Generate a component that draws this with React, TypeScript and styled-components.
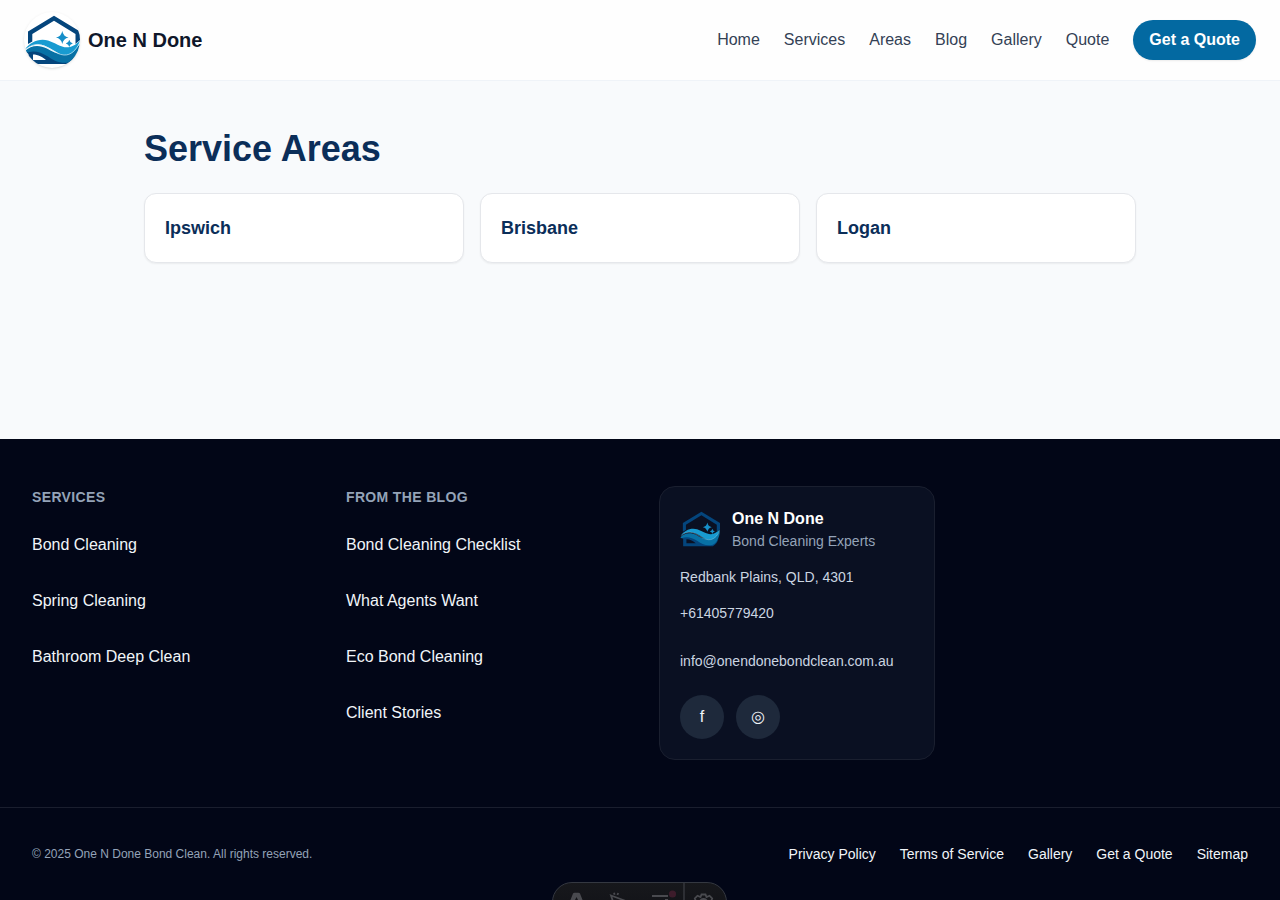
import React from "react";
import styled, { createGlobalStyle } from "styled-components";

const GlobalStyle = createGlobalStyle`
  *, *::before, *::after { box-sizing: border-box; }
  html, body { margin: 0; height: 900px; overflow: hidden; background: #f8fafc; }
  body { font-family: "Liberation Sans", Arial, sans-serif; font-size: 16px; line-height: 24px; color: #0f172a; }
  h1, h2, h3, p, ul { margin: 0; padding: 0; }
  ul { list-style: none; }
  a { color: inherit; text-decoration: none; }
`;

const Page = styled.div`
  display: flex;
  flex-direction: column;
  height: 900px;
  overflow: hidden;
`;

const Header = styled.header`
  display: flex;
  align-items: center;
  justify-content: space-between;
  flex: none;
  height: 81px;
  padding: 0 24px;
  background: #fefefe;
  border-bottom: 1px solid #eff3f8;
`;

const Brand = styled.a`
  display: flex;
  align-items: center;
  gap: 8px;
  font-size: 20px;
  line-height: 28px;
  font-weight: 700;
`;

const LogoDisc = styled.span`
  display: block;
  width: 56px;
  height: 56px;
  overflow: hidden;
  border-radius: 50%;
  background: #fff;
  box-shadow: 0 1px 3px rgba(0, 0, 0, 0.1), 0 1px 2px -1px rgba(0, 0, 0, 0.1);
`;

const LogoSvg = styled.svg`
  display: block;
  flex: none;
`;

const Nav = styled.nav`
  display: flex;
  align-items: center;
  gap: 24px;
  color: #334155;
`;

const QuoteButton = styled.a`
  padding: 8px 16px;
  border-radius: 20px;
  background: #0369a1;
  color: #fff;
  font-weight: 600;
  box-shadow: 0 1px 2px rgba(0, 0, 0, 0.08);
`;

const Main = styled.main`
  flex: none;
  width: 1024px;
  height: 358px;
  margin: 0 auto;
  padding: 48px 16px;
`;

const Title = styled.h1`
  margin-bottom: 24px;
  font-size: 36px;
  line-height: 40px;
  color: #0b2e59;
`;

const AreaGrid = styled.div`
  display: grid;
  grid-template-columns: repeat(3, 1fr);
  gap: 16px;
`;

const AreaCard = styled.a`
  padding: 20px;
  border: 1px solid #e5e7eb;
  border-radius: 12px;
  background: #fff;
  box-shadow: 0 1px 2px rgba(0, 0, 0, 0.06);
  color: #0b2e59;
  font-size: 18px;
  line-height: 28px;
  font-weight: 600;
`;

const Footer = styled.footer`
  flex: 1;
  background: #020617;
  color: #f1f5f9;
`;

const FooterColumns = styled.div`
  display: grid;
  grid-template-columns: 276px 275px 276px 1fr;
  align-items: start;
  gap: 38px;
  padding: 47px 32px;
`;

const ColumnTitle = styled.h3`
  margin: 1px 0 16px;
  color: #94a3b8;
  font-size: 14px;
  line-height: 20px;
  font-weight: 600;
  letter-spacing: 0.35px;
  text-transform: uppercase;
`;

const LinkList = styled.ul`
  display: grid;
  gap: 12px;
`;

const TallLink = styled.a`
  display: flex;
  align-items: center;
  min-height: 44px;
`;

const ContactCard = styled.section`
  padding: 20px;
  border: 1px solid #1a1f2f;
  border-radius: 16px;
  background: #0a1022;
  color: #cbd5e1;
  font-size: 14px;
  line-height: 20px;
`;

const ContactBrand = styled.div`
  display: flex;
  align-items: center;
  gap: 12px;
  margin-bottom: 16px;
`;

const ContactName = styled.p`
  color: #fff;
  font-size: 16px;
  line-height: 24px;
  font-weight: 600;
`;

const ContactTagline = styled.p`
  color: #94a3b8;
`;

const ContactLines = styled.div`
  display: grid;
  gap: 4px;
`;

const Socials = styled.div`
  display: flex;
  gap: 12px;
  margin-top: 12px;
`;

const SocialButton = styled.a`
  display: flex;
  align-items: center;
  justify-content: center;
  width: 44px;
  height: 44px;
  border-radius: 50%;
  background: #1e293b;
  color: #f1f5f9;
  font-size: 16px;
  line-height: 24px;
`;

const LegalBar = styled.div`
  display: flex;
  align-items: center;
  justify-content: space-between;
  padding: 24px 32px;
  border-top: 1px solid #1a1e2e;
  font-size: 14px;
  line-height: 20px;
`;

const Copyright = styled.p`
  color: #94a3b8;
  font-size: 12px;
  line-height: 16px;
`;

const LegalLinks = styled.nav`
  display: flex;
  gap: 24px;
`;

const DevToolbar = styled.div`
  position: fixed;
  left: 552px;
  top: 882px;
  display: flex;
  width: 175px;
  height: 40px;
  overflow: hidden;
  border: 1px solid #343841;
  border-radius: 20px;
  background: linear-gradient(180deg, #17181c, #101116);
  color: #494a4f;
`;

function Logo({ size }: { size: number }) {
  return (
    <LogoSvg width={size} height={size} viewBox="0 0 56 56" aria-hidden="true">
      <path d="M4 32V19.5L30 3.8L56 19.5V28L51.5 32V22L30 8.7L8.3 22V29.5Z" fill="#04457c" />
      <path fillRule="evenodd" d="M1.5 40C8 37 16 38 22 42C32 48 42 51 52 44L54 41C53 46 50 50 46 52H4.4V42ZM9 42.5V48H22C19 45 14 42.5 9 42.5Z" fill="#04457c" />
      <path d="M0.5 39.5C7 33 15 32.5 23 36.5C32 42 43 47 56 32C54.5 42 51 48 46 50C38 52.5 30 49 24 44.5C16 39.5 9 38 2 41Z" fill="#0871a5" />
      <path d="M1 37.5C6 30 15 26 24 28.5C35 32 43 42 56 28.5C53 40 45 45.5 36 42C28 38.5 22 31.5 12 32.7C7 33.5 4 35.3 1 37.5Z" fill="#189bd1" />
      <path d="M2 37.3C6 34 10 32.2 14 32.4C24 33.5 31 42.5 40 43C47 43.5 52 38 55.5 31" fill="none" stroke="#d5edf7" strokeWidth={size > 48 ? 0.7 : 0.4} />
      <path d="M38.3 19Q39.3 24.5 44.5 25.5Q39.3 26.6 38.3 32Q37.2 26.6 32 25.5Q37.2 24.5 38.3 19Z" fill="#168fc9" />
      <path d="M45.3 27.8Q45.9 30.8 48.8 31.4Q45.9 32 45.3 35Q44.7 32 41.8 31.4Q44.7 30.8 45.3 27.8Z" fill="#168fc9" />
    </LogoSvg>
  );
}

const navItems = ["Home", "Services", "Areas", "Blog", "Gallery", "Quote"];
const areas = ["Ipswich", "Brisbane", "Logan"];
const columns = [
  { title: "Services", links: ["Bond Cleaning", "Spring Cleaning", "Bathroom Deep Clean"] },
  { title: "From the Blog", links: ["Bond Cleaning Checklist", "What Agents Want", "Eco Bond Cleaning", "Client Stories"] },
];
const legal = ["Privacy Policy", "Terms of Service", "Gallery", "Get a Quote", "Sitemap"];

export default function App() {
  return (
    <Page>
      <GlobalStyle />
      <Header>
        <Brand href="#">
          <LogoDisc><Logo size={56} /></LogoDisc>
          One N Done
        </Brand>
        <Nav>
          {navItems.map((item) => <a href="#" key={item}>{item}</a>)}
          <QuoteButton href="#">Get a Quote</QuoteButton>
        </Nav>
      </Header>
      <Main>
        <Title>Service Areas</Title>
        <AreaGrid>
          {areas.map((area) => <AreaCard href="#" key={area}>{area}</AreaCard>)}
        </AreaGrid>
      </Main>
      <Footer>
        <FooterColumns>
          {columns.map((column) => (
            <section key={column.title}>
              <ColumnTitle>{column.title}</ColumnTitle>
              <LinkList>
                {column.links.map((link) => (
                  <li key={link}><TallLink href="#">{link}</TallLink></li>
                ))}
              </LinkList>
            </section>
          ))}
          <ContactCard>
            <ContactBrand>
              <Logo size={40} />
              <div>
                <ContactName>One N Done</ContactName>
                <ContactTagline>Bond Cleaning Experts</ContactTagline>
              </div>
            </ContactBrand>
            <ContactLines>
              <p>Redbank Plains, QLD, 4301</p>
              <TallLink href="#">+61405779420</TallLink>
              <TallLink href="#">info@onendonebondclean.com.au</TallLink>
            </ContactLines>
            <Socials>
              <SocialButton href="#">f</SocialButton>
              <SocialButton href="#">◎</SocialButton>
            </Socials>
          </ContactCard>
        </FooterColumns>
        <LegalBar>
          <Copyright>© 2025 One N Done Bond Clean. All rights reserved.</Copyright>
          <LegalLinks>
            {legal.map((item) => <TallLink href="#" key={item}>{item}</TallLink>)}
          </LegalLinks>
        </LegalBar>
      </Footer>
      <DevToolbar>
        <svg width="173" height="38" viewBox="0 0 173 38" fill="none" stroke="currentColor" strokeWidth="1.8">
          <path d="M15.5 22L20 10.5Q20.5 9.8 21.5 9.8H25.5Q26.5 9.8 27 10.5L31.5 22H27.5L23.5 14L19.5 22Z" fill="currentColor" stroke="none" />
          <path d="M58 12.5L71.5 17.5L65.5 20L62.5 26ZM61 9.8L61.6 11.8M65.2 10L64.4 12" />
          <path d="M99 13H115M112 17H115" />
          <circle cx="119.5" cy="11" r="3.6" fill="#3d1c2b" stroke="none" />
          <path d="M131 0V38" stroke="#303238" />
          <path d="M148.5 11.5H152.5L153.5 14L156.5 12.7L159.2 15.5L158 18.5L160 20V23H141V20L143 18.5L141.8 15.5L144.5 12.7L147.5 14Z" />
          <circle cx="150.5" cy="20" r="4" />
        </svg>
      </DevToolbar>
    </Page>
  );
}
